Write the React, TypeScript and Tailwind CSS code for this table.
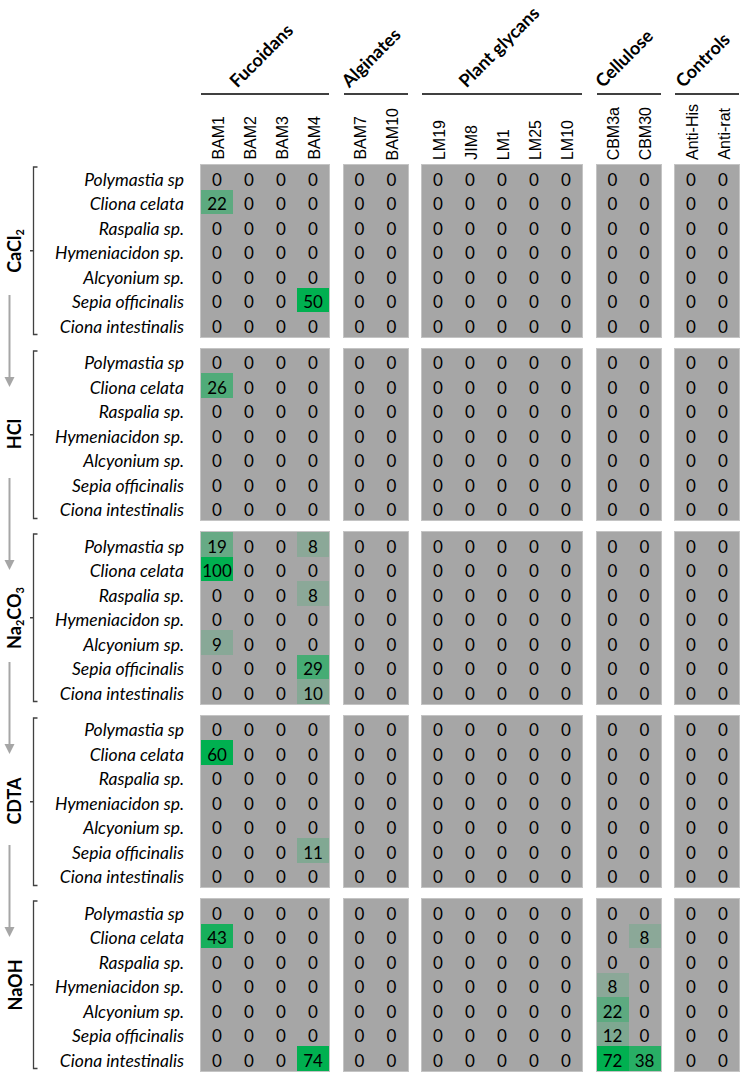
import React from "react";

const groups = [
  { name: "Fucoidans", cols: ["BAM1", "BAM2", "BAM3", "BAM4"] },
  { name: "Alginates", cols: ["BAM7", "BAM10"] },
  { name: "Plant glycans", cols: ["LM19", "JIM8", "LM1", "LM25", "LM10"] },
  { name: "Cellulose", cols: ["CBM3a", "CBM30"] },
  { name: "Controls", cols: ["Anti-His", "Anti-rat"] },
];

const species = [
  "Polymastia sp",
  "Cliona celata",
  "Raspalia sp.",
  "Hymeniacidon sp.",
  "Alcyonium sp.",
  "Sepia officinalis",
  "Ciona intestinalis",
];

// non-zero values per extraction step: "row-col" -> value (col 0..14)
const steps: { label: React.ReactNode; hits: Record<string, number> }[] = [
  { label: <>CaCl<sub className="text-[11px]">2</sub></>, hits: { "1-0": 22, "5-3": 50 } },
  { label: <>HCl</>, hits: { "1-0": 26 } },
  {
    label: <>Na<sub className="text-[11px]">2</sub>CO<sub className="text-[11px]">3</sub></>,
    hits: { "0-0": 19, "0-3": 8, "1-0": 100, "2-3": 8, "4-0": 9, "5-3": 29, "6-3": 10 },
  },
  { label: <>CDTA</>, hits: { "1-0": 60, "5-3": 11 } },
  {
    label: <>NaOH</>,
    hits: { "1-0": 43, "1-12": 8, "3-11": 8, "4-11": 22, "5-11": 12, "6-3": 74, "6-11": 72, "6-12": 38 },
  },
];

function cellColor(v: number) {
  if (!v) return undefined;
  const t = Math.min(1, v / 50);
  const mix = (a: number, b: number) => Math.round(a + (b - a) * t);
  return `rgb(${mix(166, 0)}, ${mix(166, 176)}, ${mix(166, 80)})`;
}

function Arrow() {
  return (
    <svg width="28" height="103.5" viewBox="0 0 28 103.5" className="shrink-0">
      <line x1="9.5" y1="4" x2="9.5" y2="87" stroke="#a6a6a6" strokeWidth="2" />
      <polygon points="4.5,86 14.5,86 9.5,96" fill="#a6a6a6" />
    </svg>
  );
}

function Bracket() {
  return (
    <svg width="12" height="171.5" viewBox="0 0 12 171.5" className="shrink-0">
      <path d="M9.5 2 H5.5 V169.5 H9.5 M5.5 85.75 H2" stroke="#404040" strokeWidth="1.3" fill="none" />
    </svg>
  );
}

export default function App() {
  let colIndex = 0;
  const groupStarts = groups.map((g) => {
    const s = colIndex;
    colIndex += g.cols.length;
    return s;
  });

  return (
    <div className="w-[743px] h-[1074px] overflow-hidden bg-white text-black [font-family:Lato,sans-serif]">
      {/* header */}
      <div className="flex">
        <div className="w-[201px] shrink-0" />
        <div className="flex gap-[14.5px]">
          {groups.map((g) => (
            <div key={g.name} className="flex flex-col" style={{ width: g.cols.length * 32 }}>
              <div className="h-[93px] flex items-end justify-center pb-[3px]">
                <span className="shrink-0 whitespace-nowrap text-[18px] font-bold leading-[18px] origin-bottom-left -rotate-45 translate-x-[17%]">
                  {g.name}
                </span>
              </div>
              <div className="h-[2px] bg-[#404040]" />
              <div className="h-[70px] flex">
                {g.cols.map((c) => (
                  <div key={c} className="w-[32px] flex items-end justify-center pb-[5px] pl-[3px]">
                    <span className="[writing-mode:vertical-rl] rotate-180 text-[16px] leading-none whitespace-nowrap [font-family:'Liberation_Sans',Arial,sans-serif]">
                      {c}
                    </span>
                  </div>
                ))}
              </div>
            </div>
          ))}
        </div>
      </div>

      {/* body */}
      <div className="flex">
        <div className="w-[28px] shrink-0 flex flex-col items-center">
          <div className="h-[45.75px] shrink-0" />
          {steps.map((s, i) => (
            <React.Fragment key={i}>
              <div className="h-[80px] w-full shrink-0 flex items-center justify-center">
                <span className="shrink-0 -rotate-90 text-[18px] font-bold leading-none whitespace-nowrap">
                  {s.label}
                </span>
              </div>
              {i < steps.length - 1 && <Arrow />}
            </React.Fragment>
          ))}
        </div>

        <div className="flex flex-col gap-[12px]">
          {steps.map((s, si) => (
            <div key={si} className="flex h-[171.5px]">
              <Bracket />
              <div className="w-[145px] shrink-0 flex flex-col pr-[1px]">
                {species.map((sp) => (
                  <div key={sp} className="h-[24.5px] flex items-center justify-end pt-[4px] italic text-[17.5px] leading-none whitespace-nowrap">
                    {sp}
                  </div>
                ))}
              </div>
              <div className="w-[16px] shrink-0" />
              <div className="flex gap-[14.5px]">
                {groups.map((g, gi) => (
                  <div key={g.name} className="flex flex-col bg-[#a6a6a6] shadow-[0_0_0_1px_#c4c4c4]">
                    {species.map((sp, ri) => (
                      <div key={sp} className="flex h-[24.5px]">
                        {g.cols.map((c, ci) => {
                          const v = s.hits[`${ri}-${groupStarts[gi] + ci}`] ?? 0;
                          return (
                            <div
                              key={c}
                              className="w-[32px] flex items-center justify-center pt-[4px] text-[17px] leading-none"
                              style={{ backgroundColor: cellColor(v) }}
                            >
                              {v}
                            </div>
                          );
                        })}
                      </div>
                    ))}
                  </div>
                ))}
              </div>
            </div>
          ))}
        </div>
      </div>
    </div>
  );
}
